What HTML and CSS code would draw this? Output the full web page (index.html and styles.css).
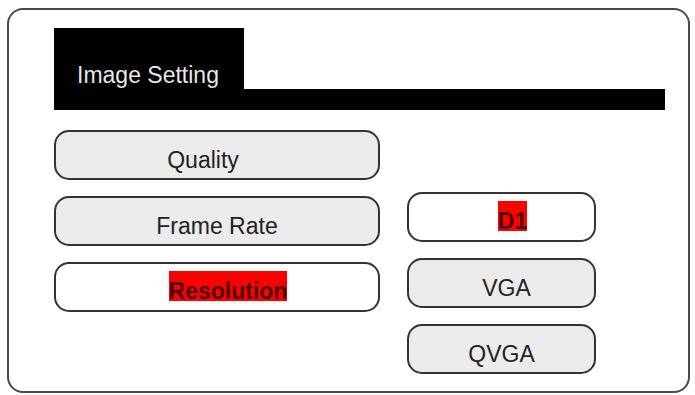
FILE: index.html
```html
<!DOCTYPE html>
<html>
<head>
<meta charset="utf-8">
<link rel="stylesheet" href="styles.css">
</head>
<body>
<div class="frame">
  <div class="header">
    <div class="tab">Image Setting</div>
    <div class="bar"></div>
  </div>
  <div class="menus">
    <div class="col left">
      <div class="btn nudge-left"><span class="label">Quality</span></div>
      <div class="btn"><span class="label">Frame Rate</span></div>
      <div class="btn sel nudge-right"><span class="label hl">Resolution</span></div>
    </div>
    <div class="col right">
      <div class="btn sel nudge-right"><span class="label hl">D1</span></div>
      <div class="btn nudge-small"><span class="label">VGA</span></div>
      <div class="btn"><span class="label">QVGA</span></div>
    </div>
  </div>
</div>
</body>
</html>
```
FILE: styles.css
```css
html, body {
  margin: 0;
  padding: 0;
  background: #ffffff;
}
body {
  padding: 8px 5px 2px 7px;
  font-family: "Liberation Sans", Arial, sans-serif;
}
.frame {
  box-sizing: border-box;
  width: 683px;
  height: 385px;
  border: 2px solid #4a4a4a;
  border-radius: 16px;
  padding: 18px 0 0 45px;
  background: #ffffff;
}
.header {
  display: flex;
  align-items: flex-end;
  width: 611px;
  height: 82px;
}
.tab {
  box-sizing: border-box;
  width: 190px;
  height: 82px;
  background: #000;
  color: #e6e6e6;
  font-size: 23px;
  line-height: 26px;
  padding: 34px 0 0 23px;
  white-space: nowrap;
}
.bar {
  flex: 1;
  height: 21px;
  background: #000;
}
.menus {
  display: flex;
  gap: 27px;
  margin-top: 20px;
}
.col {
  display: flex;
  flex-direction: column;
  gap: 16px;
}
.left { width: 326px; }
.right { width: 189px; margin-top: 62px; }
.btn {
  box-sizing: border-box;
  height: 50px;
  border: 2px solid #333;
  border-radius: 15px;
  background: #ebebeb;
  display: flex;
  justify-content: center;
  align-items: flex-start;
  padding-top: 15px;
}
.btn.sel { background: #ffffff; }
.nudge-left { padding-right: 28px; }
.nudge-right { padding-left: 22px; }
.nudge-small { padding-left: 10px; }
.label {
  display: block;
  font-size: 23px;
  line-height: 26px;
  color: #222;
}
.label.hl {
  font-weight: bold;
  color: #4a0000;
  background: #ff0000;
  line-height: 19px;
  padding-top: 11px;
  margin-top: -8px;
}
```
